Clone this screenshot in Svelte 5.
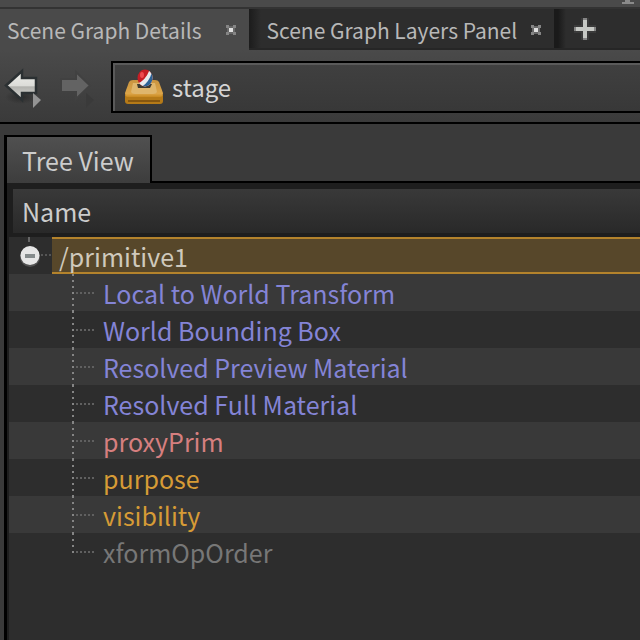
<script>
  const attributes = [
    { name: 'Local to World Transform', kind: 'computed' },
    { name: 'World Bounding Box', kind: 'computed' },
    { name: 'Resolved Preview Material', kind: 'computed' },
    { name: 'Resolved Full Material', kind: 'computed' },
    { name: 'proxyPrim', kind: 'relation' },
    { name: 'purpose', kind: 'token' },
    { name: 'visibility', kind: 'token' },
    { name: 'xformOpOrder', kind: 'muted' },
  ];
  let path = $state('stage');
  let expanded = $state(true);
</script>

{#snippet cross()}
  <svg width="10" height="10" viewBox="0 0 10 10" shape-rendering="crispEdges">
    <path d="M0 0h3v3H0zM7 0h3v3H7zM0 7h3v3H0zM7 7h3v3H7z" fill="#858585" />
    <path d="M3 1h4v2H3zM3 7h4v2H3zM1 3h2v4H1zM7 3h2v4H7z" fill="#686868" />
    <path d="M3 3h4v4H3z" fill="#e0e0e0" />
  </svg>
{/snippet}

<div class="pane">
  <div class="splitter">
    <svg width="12" height="5" viewBox="0 0 12 5" aria-hidden="true"><path d="M3 0h5v2h4v2H0V2h3z" fill="#8a8a8a" /></svg>
  </div>

  <div class="tabs">
    <div class="tab active">
      <button class="title">Scene Graph Details</button>
      <button class="close" aria-label="Close Scene Graph Details">{@render cross()}</button>
    </div>
    <div class="tab">
      <button class="title">Scene Graph Layers Panel</button>
      <button class="close" aria-label="Close Scene Graph Layers Panel">{@render cross()}</button>
    </div>
    <div class="rest">
      <button class="add" aria-label="New tab">
        <svg width="22" height="22" viewBox="0 0 22 22" shape-rendering="crispEdges">
          <path d="M7 0h8v7h7v8h-7v7H7v-7H0V7h7z" fill="#3a3a3a" />
          <path d="M9 0h4v9h9v4h-9v9H9v-9H0V9h9z" fill="#858585" />
          <path d="M9 2h4v7h7v4h-7v7H9v-7H2V9h7z" fill="#c6c8c4" />
        </svg>
      </button>
    </div>
  </div>

  <div class="toolbar">
    <button class="nav" aria-label="Back">
      <svg width="40" height="44" viewBox="0 0 40 44">
        <defs>
          <linearGradient id="back" x2="0" y2="1"><stop offset="0" stop-color="#f0f0ec" /><stop offset=".5" stop-color="#dcdcd8" /><stop offset=".55" stop-color="#b2b2ae" /><stop offset="1" stop-color="#dededa" /></linearGradient>
          <radialGradient id="shade"><stop offset="0" stop-color="#222" stop-opacity=".7" /><stop offset="1" stop-color="#222" stop-opacity="0" /></radialGradient>
        </defs>
        <ellipse cx="21" cy="32" rx="16" ry="7" fill="url(#shade)" />
        <path d="M6 20.500L22 6v7h14v15H22v7z" fill="url(#back)" stroke="#2b3032" stroke-width="2.500" />
        <path d="M33 28l8 7-8 8z" fill="#949494" />
      </svg>
    </button>
    <button class="nav" aria-label="Forward" disabled>
      <svg width="40" height="44" viewBox="0 0 40 44">
        <path d="M34 20.500L20 7v7H5v13h15v7z" fill="#636363" stroke="#414141" stroke-width="2" />
        <path d="M30 28l8 7-8 8z" fill="#3a3a3a" />
      </svg>
    </button>
    <label class="path">
      <svg width="40" height="36" viewBox="0 0 40 36" aria-hidden="true">
        <defs>
          <linearGradient id="wood" x2="0" y2="1"><stop offset="0" stop-color="#c99440" /><stop offset=".8" stop-color="#dca548" /><stop offset="1" stop-color="#c98a20" /></linearGradient>
          <clipPath id="ball"><ellipse cx="21" cy="9" rx="7.500" ry="8.500" /></clipPath>
        </defs>
        <path d="M1 26h38v6q0 3-3 3H4q-3 0-3-3z" fill="#b57a18" />
        <path d="M4 31h32v2H4z" fill="#865710" />
        <path d="M5 13q1-2 4-2h22q3 0 4 2l4 11q0 4-3 4H4q-3 0-3-4z" fill="url(#wood)" />
        <path d="M9 14h22l2 9q-1 2-4 2H11q-3 0-4-2z" fill="#dfb66c" />
        <path d="M13 15h15l-2 4H14z" fill="#3e3a30" />
        <g clip-path="url(#ball)">
          <path d="M12 0h18v19H12z" fill="#c61d25" />
          <path d="M30 0v19H12v-4q9-2 14-15z" fill="#e8eaed" />
          <path d="M30 3v16H16q9-5 12-16z" fill="#2c6295" />
        </g>
        <ellipse cx="18" cy="6" rx="2" ry="3" fill="#ee4a50" />
      </svg>
      <input aria-label="Path" bind:value={path} />
    </label>
  </div>

  <div class="content">
    <button class="view-tab">Tree View</button>
    <div class="panel">
      <div class="header">Name</div>
      <div class="tree" role="tree">
        <div class="row root" role="treeitem" aria-selected="true" aria-expanded={expanded}>
          <button class="toggle" aria-label="Toggle primitive1" onclick={() => (expanded = !expanded)}>
            <svg width="22" height="22" viewBox="0 0 22 22"><circle cx="11" cy="12" r="10" fill="#777" opacity=".5" /><circle cx="11" cy="10.500" r="9.500" fill="#e6e6e6" /><path d="M6 9h10v4H6z" fill="#858b8c" /></svg>
          </button>
          <span class="selected">/primitive1</span>
        </div>
        {#if expanded}
          {#each attributes as item}
            <div class="row child {item.kind}" role="treeitem" aria-selected="false">
              <span class="branch"></span>
              <span>{item.name}</span>
            </div>
          {/each}
        {/if}
      </div>
    </div>
  </div>
</div>

<style>
  :global(body) { margin: 0; background: #3a3a3a; }
  .pane {
    display: flex;
    flex-direction: column;
    height: 100vh;
    overflow: hidden;
    box-sizing: border-box;
    background: #3a3a3a;
    color: #cccccc;
    font: 25px/36px "Noto Sans CJK SC", "Noto Sans", sans-serif;
  }
  button, input {
    font: inherit;
    color: inherit;
    background: none;
    border: 0;
    padding: 0;
    margin: 0;
  }
  svg { display: block; overflow: visible; }
  .splitter {
    display: flex;
    justify-content: flex-end;
    height: 7px;
    padding-right: 6px;
    background: #4a4a4a;
    border-bottom: 2px solid #333;
    flex: none;
  }
  .tabs { display: flex; height: 41px; flex: none; background: #4a4a4a; font-size: 21px; color: #b8b8b8; }
  .tab {
    display: flex;
    align-items: center;
    box-sizing: border-box;
    padding: 2px 13px 0 18px;
    white-space: nowrap;
    border-bottom: 2px solid #262626;
    background: linear-gradient(90deg, #1c1c1c, #2d2d2d 12px);
  }
  .tab.active { background: #4a4a4a; border-color: #4a4a4a; padding: 2px 13px 0 7px; }
  .close { margin-left: 14px; }
  .active .close { margin-left: 24px; }
  .rest {
    flex: 1;
    display: flex;
    align-items: center;
    padding-left: 20px;
    border-bottom: 2px solid #262626;
    background: linear-gradient(90deg, #1a1a1a 4px, #2d2d2d 12px);
  }
  .toolbar {
    display: flex;
    flex: none;
    height: 74px;
    box-sizing: border-box;
    padding: 11px 0 9px;
    border-bottom: 2px solid #000;
    background: linear-gradient(#4a4a4a, #3a3a3a);
  }
  .nav { width: 50px; }
  .nav + .nav { width: 61px; padding-left: 6px; }
  .path {
    flex: 1;
    min-width: 0;
    display: flex;
    align-items: center;
    gap: 8px;
    padding-left: 11px;
    border: 2px solid #000;
    border-right: 0;
    box-shadow: inset 2px 2px #5a5a5a;
    background: linear-gradient(#404040, #383838);
  }
  .path input { flex: 1; min-width: 0; outline: 0; color: #d4d4d4; font-size: 24px; }
  .content { flex: 1; display: flex; flex-direction: column; align-items: flex-start; padding: 11px 0 0 4px; }
  .view-tab {
    height: 48px;
    box-sizing: border-box;
    padding: 0 16px 0 15px;
    border: 2px solid #000;
    border-left-width: 3px;
    border-bottom: 0;
    background: linear-gradient(#505050, #3d3d3d);
    position: relative;
    z-index: 1;
  }
  .panel {
    flex: 1;
    align-self: stretch;
    display: flex;
    flex-direction: column;
    margin-top: -2px;
    border-top: 2px solid #000;
    border-left: 3px solid #000;
    background: #1e1e1e;
  }
  .header {
    height: 44px;
    line-height: 44px;
    margin: 6px 0 4px 6px;
    padding-left: 9px;
    background: linear-gradient(#393939, #292929);
  }
  .tree { flex: 1; margin-left: 2px; background: #2d2d2d; }
  .row { display: flex; height: 37px; line-height: 38px; white-space: nowrap; }
  .root { line-height: 34px; }
  .toggle {
    width: 43px;
    padding-left: 10px;
    background:
      repeating-linear-gradient(90deg, #555 0 2px, transparent 2px 4px) right 17px / 11px 2px no-repeat,
      linear-gradient(#666, #666) 19px 0 / 2px 5px no-repeat;
  }
  .selected {
    flex: 1;
    box-sizing: border-box;
    height: 37px;
    padding-left: 7px;
    border: 2px solid #b4832c;
    border-width: 2px 0;
    background: #57472a;
    color: #cfc9bc;
  }
  .child:nth-child(even) { background: #393939; }
  .branch {
    width: 24px;
    margin: 0 7px 0 63px;
    background:
      repeating-linear-gradient(#858585 0 2px, transparent 2px 6px) 0 0 / 2px 100% no-repeat,
      repeating-linear-gradient(90deg, #606060 0 2px, transparent 2px 4px) 0 18px / 24px 2px no-repeat;
  }
  .child:last-child .branch { background-size: 2px 20px, 24px 2px; }
  .computed { color: #8484d6; }
  .relation { color: #d67f7f; }
  .token { color: #d69b36; }
  .muted { color: #777777; }
</style>
